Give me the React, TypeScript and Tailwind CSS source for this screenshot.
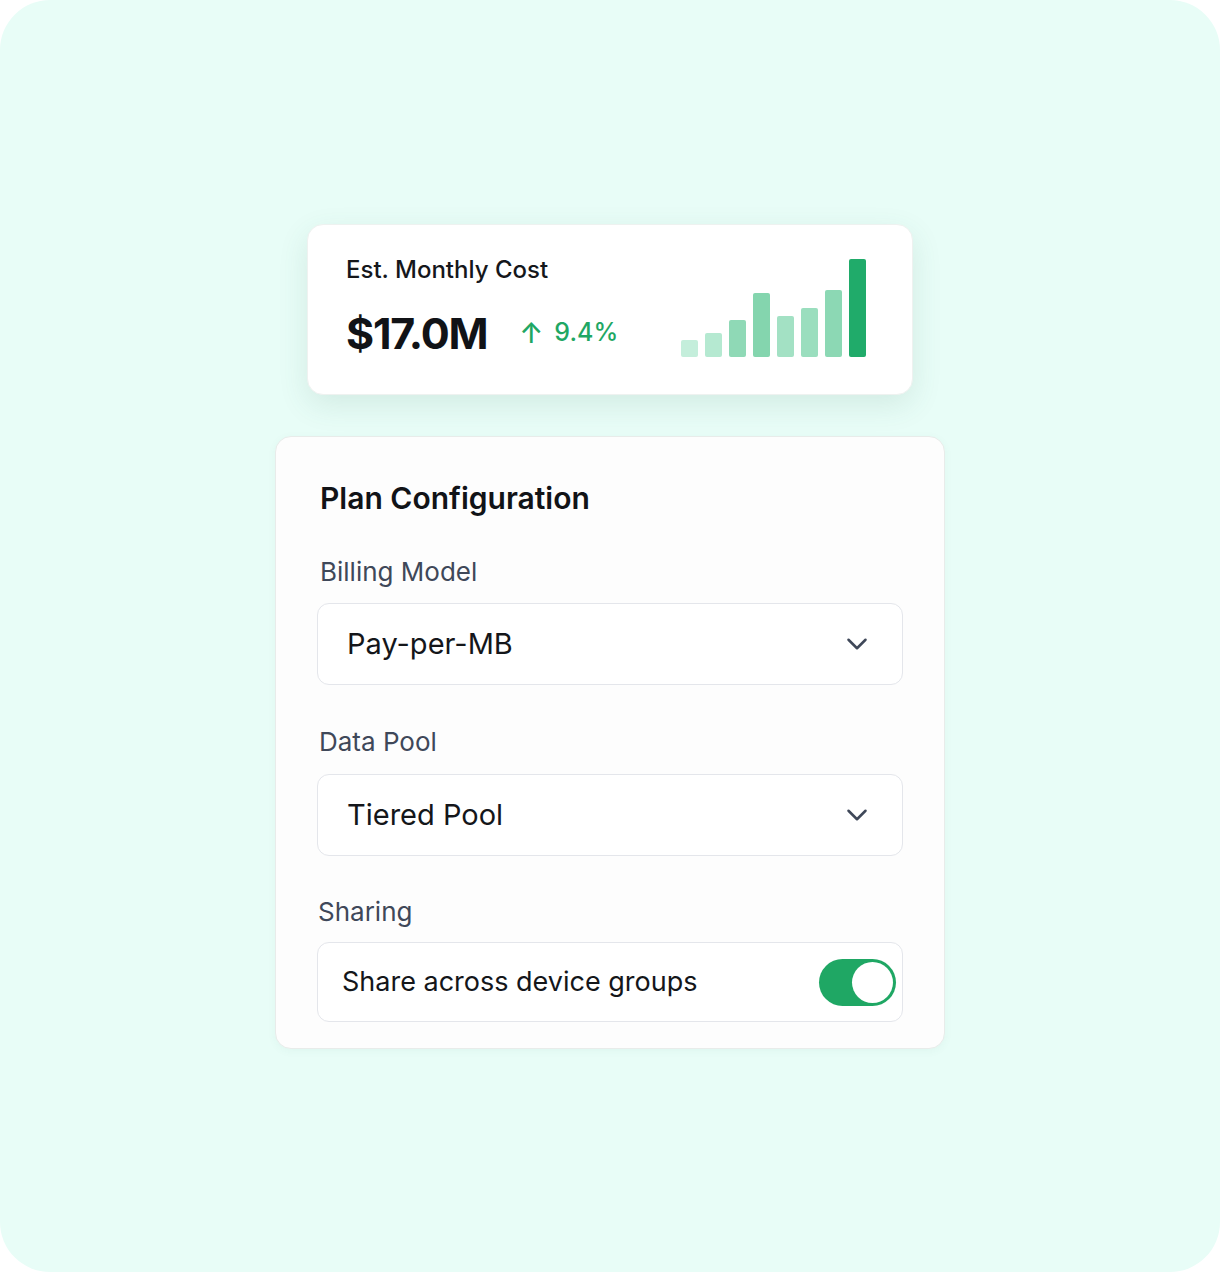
import { ChevronDown } from "lucide-react";

const bars = [
  { h: 17, color: "bg-[#c4eedb]" },
  { h: 24, color: "bg-[#b5e9d1]" },
  { h: 37, color: "bg-[#8fd9b6]" },
  { h: 64, color: "bg-[#84d5ae]" },
  { h: 41, color: "bg-[#a3e1c4]" },
  { h: 49, color: "bg-[#9adebe]" },
  { h: 67, color: "bg-[#8cd8b4]" },
  { h: 98, color: "bg-[#20ab6a]" },
];

function SelectBox({ value }: { value: string }) {
  return (
    <div className="flex h-[82px] items-center justify-between rounded-xl border border-[#e4e6eb] bg-white pl-[29px] pr-[28px]">
      <span className="text-[29px] text-[#14161a]">{value}</span>
      <ChevronDown className="h-[34px] w-[34px] text-[#3f4859]" strokeWidth={1.8} />
    </div>
  );
}

export default function App() {
  return (
    <div className="min-h-[1272px] w-[1220px] bg-white font-['Inter',sans-serif]">
      <div className="flex h-[1272px] flex-col items-center rounded-[50px] bg-[#e8fdf7] pt-[224px]">
        {/* Cost card */}
        <div className="flex h-[171px] w-[606px] items-end justify-between rounded-2xl border border-[#eef2f0] bg-white pb-[37px] pl-[38px] pr-[46px] shadow-[0_10px_30px_rgba(60,110,90,0.12)]">
          <div className="flex flex-col">
            <span className="text-[24px] font-medium leading-[29px] text-[#15171b]">Est. Monthly Cost</span>
            <div className="mt-[25px] flex items-center">
              <span className="text-[43px] font-bold leading-[48px] tracking-[-1.2px] text-[#111317]">$17.0M</span>
              <span className="ml-[32px] flex items-center gap-[11px] text-[25px] font-medium text-[#1fa764]">
                <span className="text-[28px] leading-[28px]">↑</span>
                9.4%
              </span>
            </div>
          </div>
          <div className="flex items-end gap-[7px]">
            {bars.map((b, i) => (
              <div key={i} className={`w-[17px] rounded-[2px] ${b.color}`} style={{ height: b.h }} />
            ))}
          </div>
        </div>

        {/* Plan configuration */}
        <div className="mt-[41px] w-[670px] rounded-2xl border border-[#e8ecea] bg-[#fdfdfd] px-[41px] pb-[26px] pt-[39px] shadow-[0_2px_8px_rgba(60,110,90,0.05)]">
          <h2 className="pl-[3px] text-[30px] font-semibold text-[#111317]">Plan Configuration</h2>

          <div className="mt-[35px] pl-[3px] text-[26px] leading-[32px] text-[#3f4859]">Billing Model</div>
          <div className="mt-[15px]">
            <SelectBox value="Pay-per-MB" />
          </div>

          <div className="mt-[41px] pl-[2px] text-[26px] leading-[32px] text-[#3f4859]">Data Pool</div>
          <div className="mt-[16px]">
            <SelectBox value="Tiered Pool" />
          </div>

          <div className="mt-[40px] pl-[1px] text-[26px] leading-[32px] text-[#3f4859]">Sharing</div>
          <div className="mt-[14px] flex h-[80px] items-center justify-between rounded-xl border border-[#e4e6eb] bg-white pl-[24px] pr-[6px]">
            <span className="text-[27px] text-[#14161a]">Share across device groups</span>
            <div className="flex h-[47px] w-[77px] items-center justify-end rounded-full bg-[#1fa764] p-[3px]">
              <div className="h-[41px] w-[41px] rounded-full bg-white" />
            </div>
          </div>
        </div>
      </div>
    </div>
  );
}
